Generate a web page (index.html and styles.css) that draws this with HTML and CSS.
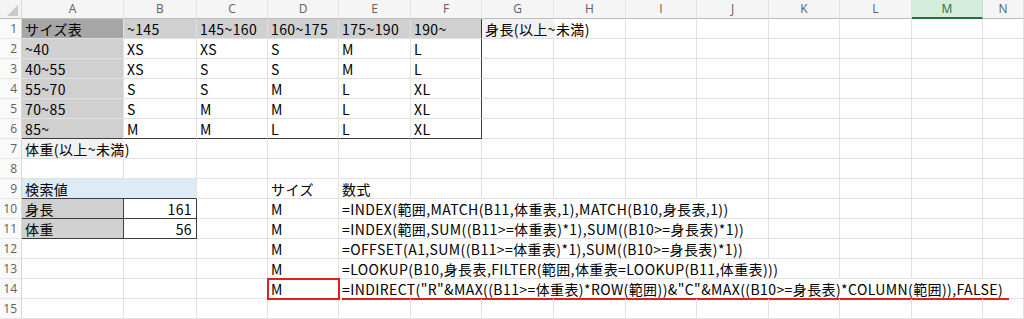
FILE: index.html
```html
<!DOCTYPE html>
<html lang="ja">
<head>
<meta charset="utf-8">
<title>サイズ表</title>
<link rel="stylesheet" href="styles.css">
</head>
<body>

<div class="sheet">
<!-- column headers -->
<div class="corner"><svg width="22" height="19" viewBox="0 0 22 19"><polygon points="18,5 18,16 7,16" fill="#c9c9c9"/></svg></div>
<div class="colhead">A</div>
<div class="colhead">B</div>
<div class="colhead">C</div>
<div class="colhead">D</div>
<div class="colhead">E</div>
<div class="colhead">F</div>
<div class="colhead">G</div>
<div class="colhead">H</div>
<div class="colhead">I</div>
<div class="colhead">J</div>
<div class="colhead">K</div>
<div class="colhead">L</div>
<div class="colhead picked">M</div>
<div class="colhead">N</div>

<!-- 1 -->
<div class="rowhead">1</div>
<div class="cell dark">サイズ表</div>
<div class="cell gray">~145</div>
<div class="cell gray">145~160</div>
<div class="cell gray">160~175</div>
<div class="cell gray">175~190</div>
<div class="cell gray edge">190~</div>
<div class="cell note spill">身長(以上~未満)</div>
<div class="cell"></div><div class="cell"></div><div class="cell"></div><div class="cell"></div><div class="cell"></div><div class="cell"></div><div class="cell"></div>

<!-- 2 -->
<div class="rowhead">2</div>
<div class="cell gray">~40</div>
<div class="cell">XS</div>
<div class="cell">XS</div>
<div class="cell">S</div>
<div class="cell">M</div>
<div class="cell edge">L</div>
<div class="cell"></div><div class="cell"></div><div class="cell"></div><div class="cell"></div><div class="cell"></div><div class="cell"></div><div class="cell"></div><div class="cell"></div>

<!-- 3 -->
<div class="rowhead">3</div>
<div class="cell gray">40~55</div>
<div class="cell">XS</div>
<div class="cell">S</div>
<div class="cell">S</div>
<div class="cell">M</div>
<div class="cell edge">L</div>
<div class="cell"></div><div class="cell"></div><div class="cell"></div><div class="cell"></div><div class="cell"></div><div class="cell"></div><div class="cell"></div><div class="cell"></div>

<!-- 4 -->
<div class="rowhead">4</div>
<div class="cell gray">55~70</div>
<div class="cell">S</div>
<div class="cell">S</div>
<div class="cell">M</div>
<div class="cell">L</div>
<div class="cell edge">XL</div>
<div class="cell"></div><div class="cell"></div><div class="cell"></div><div class="cell"></div><div class="cell"></div><div class="cell"></div><div class="cell"></div><div class="cell"></div>

<!-- 5 -->
<div class="rowhead">5</div>
<div class="cell gray">70~85</div>
<div class="cell">S</div>
<div class="cell">M</div>
<div class="cell">M</div>
<div class="cell">L</div>
<div class="cell edge">XL</div>
<div class="cell"></div><div class="cell"></div><div class="cell"></div><div class="cell"></div><div class="cell"></div><div class="cell"></div><div class="cell"></div><div class="cell"></div>

<!-- 6 -->
<div class="rowhead">6</div>
<div class="cell gray foot">85~</div>
<div class="cell foot">M</div>
<div class="cell foot">M</div>
<div class="cell foot">L</div>
<div class="cell foot">L</div>
<div class="cell foot edge">XL</div>
<div class="cell"></div><div class="cell"></div><div class="cell"></div><div class="cell"></div><div class="cell"></div><div class="cell"></div><div class="cell"></div><div class="cell"></div>

<!-- 7 -->
<div class="rowhead">7</div>
<div class="cell note spill">体重(以上~未満)</div>
<div class="cell"></div><div class="cell"></div><div class="cell"></div><div class="cell"></div><div class="cell"></div><div class="cell"></div><div class="cell"></div><div class="cell"></div><div class="cell"></div><div class="cell"></div><div class="cell"></div><div class="cell"></div><div class="cell"></div>

<!-- 8 -->
<div class="rowhead">8</div>
<div class="cell"></div><div class="cell"></div><div class="cell"></div><div class="cell"></div><div class="cell"></div><div class="cell"></div><div class="cell"></div><div class="cell"></div><div class="cell"></div><div class="cell"></div><div class="cell"></div><div class="cell"></div><div class="cell"></div><div class="cell"></div>

<!-- 9 -->
<div class="rowhead">9</div>
<div class="cell blue span2">検索値</div>
<div class="cell"></div>
<div class="cell">サイズ</div>
<div class="cell">数式</div>
<div class="cell"></div><div class="cell"></div><div class="cell"></div><div class="cell"></div><div class="cell"></div><div class="cell"></div><div class="cell"></div><div class="cell"></div><div class="cell"></div>

<!-- 10 -->
<div class="rowhead">10</div>
<div class="cell gray box">身長</div>
<div class="cell num box">161</div>
<div class="cell"></div>
<div class="cell">M</div>
<div class="cell span6">=INDEX(範囲,MATCH(B11,体重表,1),MATCH(B10,身長表,1))</div>
<div class="cell"></div><div class="cell"></div><div class="cell"></div><div class="cell"></div>

<!-- 11 -->
<div class="rowhead">11</div>
<div class="cell gray box">体重</div>
<div class="cell num box">56</div>
<div class="cell"></div>
<div class="cell">M</div>
<div class="cell span6">=INDEX(範囲,SUM((B11&gt;=体重表)*1),SUM((B10&gt;=身長表)*1))</div>
<div class="cell"></div><div class="cell"></div><div class="cell"></div><div class="cell"></div>

<!-- 12 -->
<div class="rowhead">12</div>
<div class="cell"></div><div class="cell"></div><div class="cell"></div>
<div class="cell">M</div>
<div class="cell span6">=OFFSET(A1,SUM((B11&gt;=体重表)*1),SUM((B10&gt;=身長表)*1))</div>
<div class="cell"></div><div class="cell"></div><div class="cell"></div><div class="cell"></div>

<!-- 13 -->
<div class="rowhead">13</div>
<div class="cell"></div><div class="cell"></div><div class="cell"></div>
<div class="cell">M</div>
<div class="cell span7">=LOOKUP(B10,身長表,FILTER(範囲,体重表=LOOKUP(B11,体重表)))</div>
<div class="cell"></div><div class="cell"></div><div class="cell"></div>

<!-- 14 -->
<div class="rowhead">14</div>
<div class="cell"></div><div class="cell"></div><div class="cell"></div>
<div class="cell hit">M</div>
<div class="cell span10"><span class="mark">=INDIRECT("R"&amp;MAX((B11&gt;=体重表)*ROW(範囲))&amp;"C"&amp;MAX((B10&gt;=身長表)*COLUMN(範囲)),FALSE)</span></div>

<!-- 15 -->
<div class="rowhead">15</div>
<div class="cell"></div><div class="cell"></div><div class="cell"></div><div class="cell"></div><div class="cell"></div><div class="cell"></div><div class="cell"></div><div class="cell"></div><div class="cell"></div><div class="cell"></div><div class="cell"></div><div class="cell"></div><div class="cell"></div><div class="cell"></div>
</div>

</body>
</html>
```

FILE: styles.css
```css
html {
	background-color:#ffffff;
}
body {
	margin:0;
	overflow:hidden;
}
.sheet {
	display:grid;
	grid-template-columns:22px 102px 73px 71px 71px 72px 71px 72px 72px 71px 72px 71px 72px 71px 1fr;
	grid-template-rows:19px;
	grid-auto-rows:20px;
	font-family:"Noto Sans CJK JP", "Noto Sans", sans-serif;
	font-size:14px;
	color:#000000;
}
.corner {
	background-color:#f3f3f3;
	border-right:1px solid #dadada;
	border-bottom:1px solid #bdbdbd;
	box-sizing:border-box;
}
.corner svg {
	display:block;
}
.colhead {
	background-color:#f5f5f5;
	color:#5f5f5f;
	font-family:"Open Sans", "Noto Sans", sans-serif;
	font-size:12px;
	line-height:18px;
	text-align:center;
	border-right:1px solid #e3e3e3;
	border-bottom:1px solid #bdbdbd;
	box-sizing:border-box;
}
.colhead.picked {
	background-color:#d3ecdc;
	color:#217346;
	border-right-color:#bfe0cb;
	border-bottom:2px solid #217346;
}
.rowhead {
	background-color:#fafafa;
	color:#5f5f5f;
	font-family:"Open Sans", "Noto Sans", sans-serif;
	font-size:12px;
	line-height:19px;
	text-align:right;
	padding-right:4px;
	border-right:1px solid #d6d6d6;
	border-bottom:1px solid #e6e6e6;
	box-sizing:border-box;
}
.cell {
	border-right:1px solid #e1e1e1;
	border-bottom:1px solid #e1e1e1;
	box-sizing:border-box;
	padding-left:3px;
	line-height:20px;
	letter-spacing:0.4px;
	white-space:nowrap;
}
.dark {
	background-color:#a6a6a6;
}
.gray {
	background-color:#d0d0d0;
}
.note {
	background-color:#f2f2f2;
}
.blue {
	background-color:#ddebf7;
}
.spill {
	z-index:1;
	border-right-color:transparent;
	overflow:visible;
}
.edge {
	border-right-color:#3c3c3c;
}
.foot {
	border-bottom-color:#3c3c3c;
}
.span2 {
	grid-column:span 2;
	border-bottom-color:#3c3c3c;
}
.span6 {
	grid-column:span 6;
}
.span7 {
	grid-column:span 7;
}
.span10 {
	grid-column:span 10;
}
.box {
	border-right-color:#3c3c3c;
	border-bottom-color:#3c3c3c;
}
.num {
	text-align:right;
	padding-left:0;
	padding-right:4px;
}
.hit {
	outline:2px solid #e3201f;
	outline-offset:-1px;
	z-index:2;
}
.mark {
	display:inline-block;
	line-height:17px;
	padding-right:6px;
	border-bottom:2px solid #e3201f;
}
```
